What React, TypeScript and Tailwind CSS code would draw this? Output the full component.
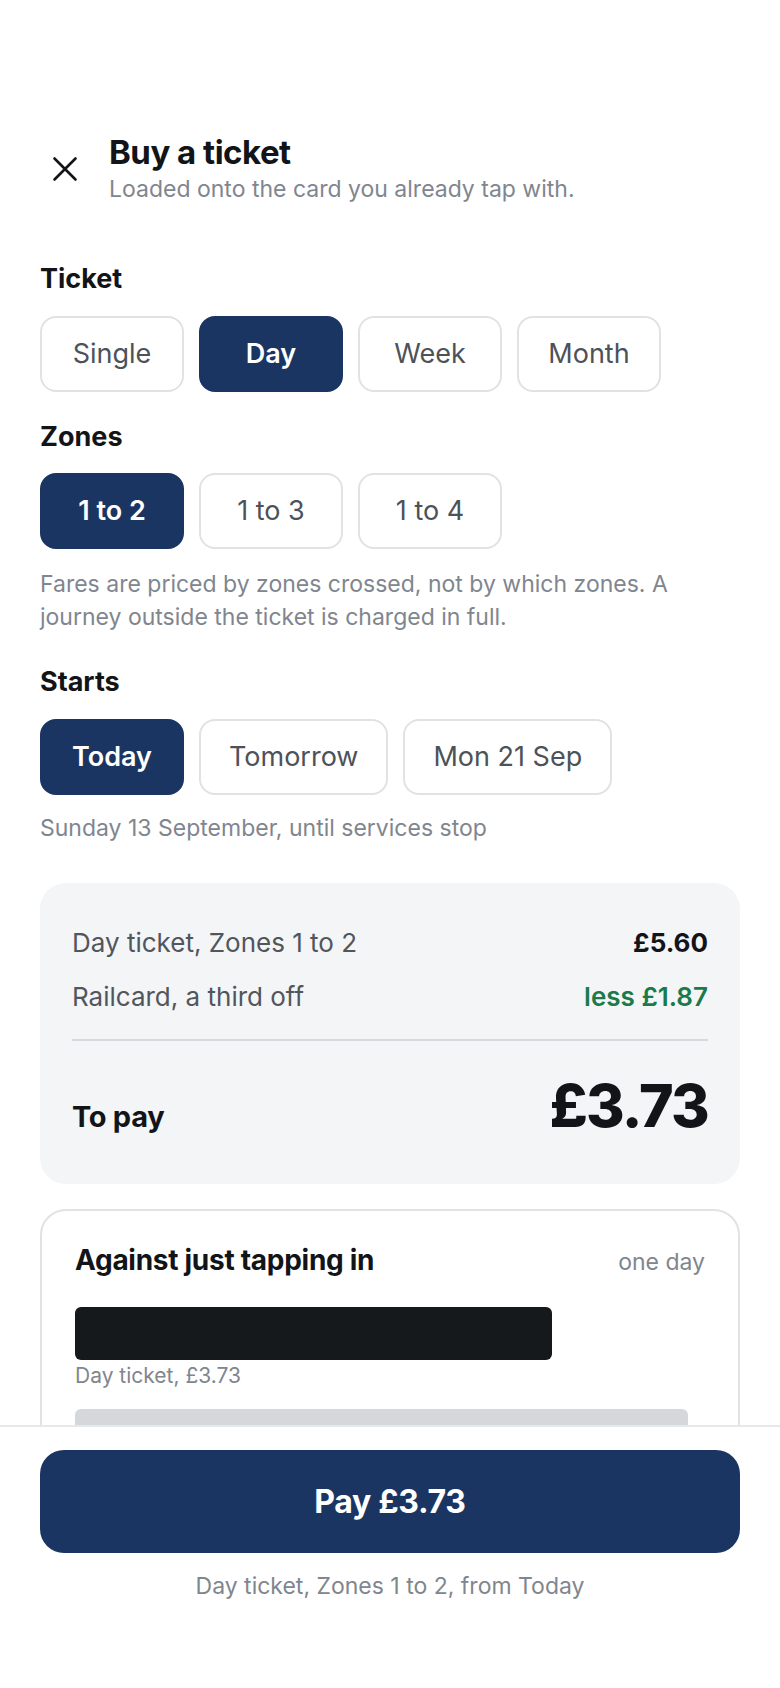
import { useState } from 'react';

const ink = 'text-[#121418]';

interface ChipsProps {
  options: string[];
  value: string;
  onChange: (v: string) => void;
}

const Chips = ({ options, value, onChange }: ChipsProps) => (
  <div className="flex gap-[15px]">
    {options.map((o) => {
      const active = o === value;
      return (
        <button
          key={o}
          onClick={() => onChange(o)}
          className={
            active
              ? 'h-[76px] min-w-[144px] px-[28px] rounded-[16px] border-2 border-[#1b3563] bg-[#1b3563] text-white text-[27px] font-semibold'
              : 'h-[76px] min-w-[144px] px-[28px] rounded-[16px] border-2 border-[#e0e2e5] bg-white text-[#4d5259] text-[27px]'
          }
        >
          {o}
        </button>
      );
    })}
  </div>
);

const App = () => {
  const [ticket, setTicket] = useState('Day');
  const [zones, setZones] = useState('1 to 2');
  const [start, setStart] = useState('Today');

  return (
    <div className="min-h-screen bg-white font-['Inter',sans-serif] pb-[280px]">
      <div className="px-[40px] pt-[133px]">
        {/* Header */}
        <div className="flex items-center gap-[19px]">
          <button className="w-[50px] h-[50px] flex items-center justify-center text-[#121418]" aria-label="Close">
            <svg width="26" height="26" viewBox="0 0 26 26" fill="none" stroke="currentColor" strokeWidth="2.6" strokeLinecap="round">
              <path d="M2.5 2.5 23.5 23.5M23.5 2.5 2.5 23.5" />
            </svg>
          </button>
          <div>
            <h1 className={`text-[33px] leading-[38px] font-bold tracking-[-0.015em] ${ink}`}>Buy a ticket</h1>
            <p className="mt-[3px] text-[23px] leading-[30px] text-[#80868e]">Loaded onto the card you already tap with.</p>
          </div>
        </div>

        {/* Ticket */}
        <h2 className={`mt-[58px] text-[27px] leading-[34px] font-bold ${ink}`}>Ticket</h2>
        <div className="mt-[20px]">
          <Chips options={['Single', 'Day', 'Week', 'Month']} value={ticket} onChange={setTicket} />
        </div>

        {/* Zones */}
        <h2 className={`mt-[28px] text-[27px] leading-[34px] font-bold ${ink}`}>Zones</h2>
        <div className="mt-[19px]">
          <Chips options={['1 to 2', '1 to 3', '1 to 4']} value={zones} onChange={setZones} />
        </div>
        <p className="mt-[19px] text-[23px] leading-[33px] text-[#80868e] max-w-[680px]">
          Fares are priced by zones crossed, not by which zones. A journey outside the ticket is charged in full.
        </p>

        {/* Starts */}
        <h2 className={`mt-[31px] text-[27px] leading-[34px] font-bold ${ink}`}>Starts</h2>
        <div className="mt-[20px]">
          <Chips options={['Today', 'Tomorrow', 'Mon 21 Sep']} value={start} onChange={setStart} />
        </div>
        <p className="mt-[17px] text-[23px] leading-[33px] text-[#80868e]">Sunday 13 September, until services stop</p>

        {/* Summary */}
        <div className="mt-[38px] rounded-[26px] bg-[#f3f5f7] px-[32px] pt-[44px] pb-[45px]">
          <div className="flex justify-between items-baseline text-[26px] leading-[32px]">
            <span className="text-[#51565d]">Day ticket, Zones 1 to 2</span>
            <span className={`font-bold ${ink}`}>£5.60</span>
          </div>
          <div className="mt-[22px] flex justify-between items-baseline text-[26px] leading-[32px]">
            <span className="text-[#51565d]">Railcard, a third off</span>
            <span className="font-semibold text-[#1a7a4a]">less £1.87</span>
          </div>
          <div className="mt-[26px] h-[2px] bg-[#d6d9dd]" />
          <div className="mt-[37px] flex justify-between items-baseline">
            <span className={`text-[29px] font-bold tracking-[-0.01em] ${ink}`}>To pay</span>
            <span className={`text-[59px] leading-[56px] font-extrabold tracking-[-0.03em] ${ink}`}>£3.73</span>
          </div>
        </div>

        {/* Comparison */}
        <div className="mt-[25px] rounded-[26px] border-2 border-[#e0e2e5] px-[33px] pt-[32px] pb-[32px]">
          <div className="flex justify-between items-baseline">
            <span className={`text-[28px] leading-[34px] font-bold tracking-[-0.01em] ${ink}`}>Against just tapping in</span>
            <span className="text-[23px] text-[#80868e]">one day</span>
          </div>
          <div className="mt-[28px] h-[53px] w-[477px] rounded-[6px] bg-[#16191c]" />
          <p className="mt-[3px] text-[21px] leading-[26px] text-[#80868e]">Day ticket, £3.73</p>
          <div className="mt-[20px] h-[53px] w-[613px] rounded-[6px] bg-[#d5d8db]" />
          <p className="mt-[3px] text-[21px] leading-[26px] text-[#80868e]">Tapping in and out, £5.60</p>
        </div>
      </div>

      {/* Pay bar */}
      <div className="fixed bottom-0 left-0 right-0 bg-white border-t-2 border-[#e6e8eb] px-[40px] pt-[23px] pb-[87px]">
        <button className="w-full h-[103px] rounded-[24px] bg-[#1b3563] text-white text-[32px] font-bold tracking-[-0.01em]">
          Pay £3.73
        </button>
        <p className="mt-[18px] text-center text-[23px] leading-[30px] text-[#80868e]">Day ticket, Zones 1 to 2, from Today</p>
      </div>
    </div>
  );
};

export default App;
